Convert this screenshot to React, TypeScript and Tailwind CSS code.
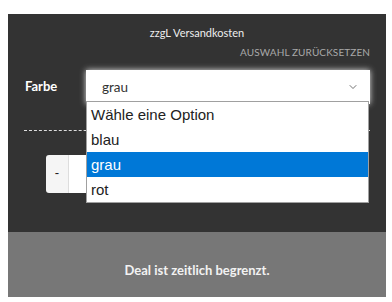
import { ChevronDown } from "lucide-react";

const options = ["Wähle eine Option", "blau", "grau", "rot"];

export default function App() {
  return (
    <div className="h-[302px] w-[392px] bg-white pl-2 pt-[14px] font-['Lato',sans-serif]">
      <div className="relative w-[378px]">
        <div className="h-[218px] bg-[#333333] pt-[12px]">
          <p className="text-center text-[11px] leading-[14px] text-[#eeeeee]">
            zzgL Versandkosten
          </p>
          <p className="mt-[5px] pr-4 text-right text-[10px] leading-[14px] tracking-[0.1px] text-[#a9a9a9]">
            AUSWAHL ZURÜCKSETZEN
          </p>
          <div className="mt-[11px] flex items-center">
            <span className="w-[78px] pl-[17px] text-[13px] font-bold text-white">
              Farbe
            </span>
            <div className="flex h-[34px] w-[284px] items-center justify-between bg-white pl-4 pr-[11px] shadow-[0_0_6px_rgba(255,255,255,0.85)]">
              <span className="text-[13.5px] text-[#333333]">grau</span>
              <ChevronDown className="h-[12px] w-[12px] text-[#444444]" strokeWidth={1.5} />
            </div>
          </div>
          <div className="ml-4 mr-4 mt-[26px] border-t border-dashed border-[#dddddd]" />
          <div className="ml-[38px] mt-[24px] flex h-[38px]">
            <button className="w-[22px] rounded-l-[3px] bg-[#f5f5f5] text-[13px] text-[#222222]">
              -
            </button>
            <div className="w-[60px] rounded-r-[3px] border-l border-[#dddddd] bg-white" />
          </div>
        </div>
        <div className="flex h-[65px] items-center justify-center bg-[#777777] pt-[12px]">
          <p className="text-[13px] font-bold text-[#f2f2f2]">
            Deal ist zeitlich begrenzt.
          </p>
        </div>
        <ul className="absolute left-[78px] top-[87px] w-[283px] border border-[#a0a0a0] bg-white font-['Liberation_Sans',Arial,sans-serif] text-[15px] text-[#222222]">
          {options.map((o) => (
            <li
              key={o}
              className={
                o === "grau"
                  ? "h-[25px] bg-[#0078d7] pl-1 leading-[25px] text-white"
                  : "h-[25px] pl-1 leading-[25px]"
              }
            >
              {o}
            </li>
          ))}
        </ul>
      </div>
    </div>
  );
}
